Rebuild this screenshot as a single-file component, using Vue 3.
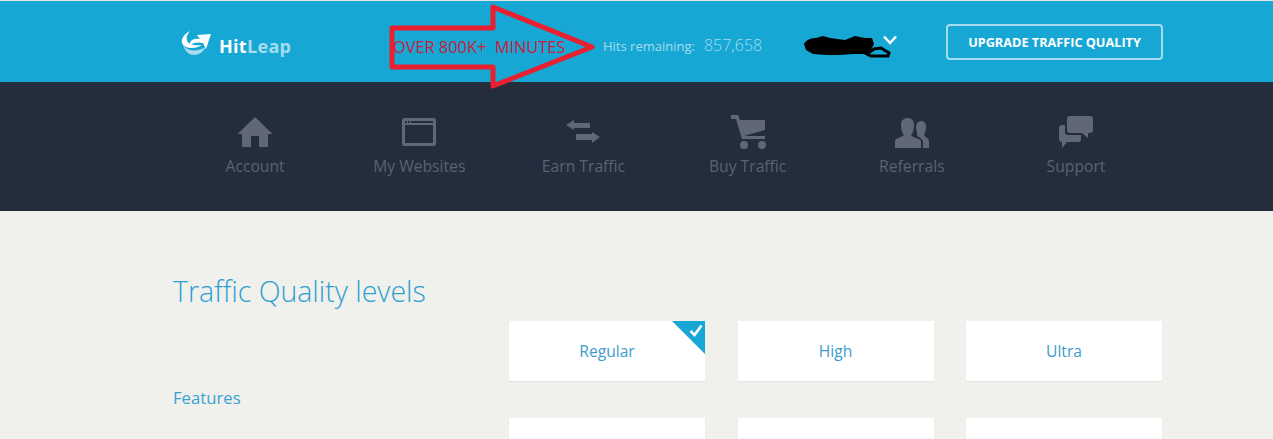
<script setup>
const navItems = [
  { label: 'Account', icon: 'home' },
  { label: 'My Websites', icon: 'window' },
  { label: 'Earn Traffic', icon: 'swap' },
  { label: 'Buy Traffic', icon: 'cart' },
  { label: 'Referrals', icon: 'people' },
  { label: 'Support', icon: 'chat' }
]
</script>

<template>
  <div class="page">
    <header class="top">
      <div class="logo">
        <svg class="logo-mark" width="30" height="26" viewBox="0 0 30 26">
          <path d="M9 1 C3 4 0 9 1 13 C2 16 6 18 11 18 C15 18 19 16 21 15 C15 16 8 15 6 11 C5 8 6 4 9 1 Z" fill="#ffffff" />
          <path d="M2 15 C4 22 9 25 13 25 C18 25 22 22 25 17 C20 20 14 21 9 20 C6 19 3 17 2 15 Z" fill="#a5dcef" />
          <path d="M9 12 C11 9 15 8 19 9 L16 5 L30 4 L25 19 L22 13 C18 12 13 12 9 15 Z" fill="#ffffff" />
        </svg>
        <span class="logo-text">Hit<span class="logo-soft">Leap</span></span>
      </div>
      <div class="note">OVER 800K+&nbsp; MINUTES</div>
      <div class="hits">
        <span class="hits-label">Hits remaining:</span>
        <span class="hits-value">857,658</span>
      </div>
      <div class="user">
        <svg class="scribble" width="92" height="28" viewBox="0 0 92 28">
          <path d="M1 9 C3 5 8 3 13 3 L20 1 L27 3 L42 5 L52 1 L62 3 L69 3 L71 9 L68 15 L64 19 L50 19 L36 20 L24 20 L10 19 L3 15 Z" fill="#000" />
          <path d="M64 19 L71 14 L78 13 L86 18 L85 21 L68 21 Z" fill="#17a7d5" stroke="#000" stroke-width="3" />
        </svg>
        <svg class="chevron" width="14" height="10" viewBox="0 0 14 10">
          <path d="M1 1.5 L7 8 L13 1.5" fill="none" stroke="#fff" stroke-width="2.5" />
        </svg>
      </div>
      <button class="upgrade" type="button">UPGRADE TRAFFIC QUALITY</button>
      <svg class="arrow" width="210" height="90" viewBox="0 0 210 90">
        <path d="M3 25 L104 25 L104 4 L203 44 L104 83 L104 64 L3 64 Z" fill="none" stroke="#e8202f" stroke-width="5" stroke-linejoin="round" />
      </svg>
    </header>

    <nav class="nav">
      <a v-for="item in navItems" :key="item.label" class="nav-item">
        <svg class="nav-icon" width="40" height="36" viewBox="0 0 40 36">
          <template v-if="item.icon === 'home'">
            <path d="M20 2 L37.5 19 L33 19 L33 32 L24 32 L24 21 L16 21 L16 32 L7 32 L7 19 L2.5 19 Z" />
          </template>
          <template v-else-if="item.icon === 'window'">
            <path fill-rule="evenodd" d="M5.5 3 L34.5 3 Q37 3 37 5.5 L37 28.5 Q37 31 34.5 31 L5.5 31 Q3 31 3 28.5 L3 5.5 Q3 3 5.5 3 Z M6 10 L6 28 L34 28 L34 10 Z M6 6 L6 8 L8 8 L8 6 Z M9 6 L9 8 L11 8 L11 6 Z M12 6 L12 8 L34 8 L34 6 Z" />
          </template>
          <template v-else-if="item.icon === 'swap'">
            <path d="M3 10 L11 5 L11 8 L27 8 L27 13 L11 13 L11 15 Z" />
            <path d="M37 22 L29 17 L29 19 L13 19 L13 25 L29 25 L29 28 Z" />
          </template>
          <template v-else-if="item.icon === 'cart'">
            <path d="M3 0 L10 0 L12 5 L37 5 L37 15 L16 21 L37 21 L37 24 L14 24 L8 4 L3 4 Z" />
            <circle cx="16" cy="30" r="4" />
            <circle cx="34" cy="30" r="4" />
          </template>
          <template v-else-if="item.icon === 'people'">
            <path d="M3 33 L3 26 C3 23 9 23 12 20 C10 18 9 14 9 10 C9 5 12 3 16 3 C20 3 22 6 22 10 C22 14 21 18 19 20 C21 23 27 23 29 26 L29 33 Z" />
            <path d="M31 33 L31 26 C29 23 27 22 25 21 C26 20 24 15 24 12 C24 8 27 6 29 6 C32 6 34 8 34 12 C34 15 33 18 32 20 C34 23 37 23 37 26 L37 33 Z" />
          </template>
          <template v-else>
            <path d="M14 1 L34 1 Q37 1 37 4 L37 15 Q37 18 34 18 L32 18 L32 23 L26 18 L14 18 Q11 18 11 15 L11 4 Q11 1 14 1 Z" />
            <path d="M6 10 L9 10 L9 17 Q9 20 12 20 L25 20 L25 24 Q25 27 22 27 L11 27 L6 33 L6 27 Q3 27 3 24 L3 13 Q3 10 6 10 Z" />
          </template>
        </svg>
        <span class="nav-label">{{ item.label }}</span>
      </a>
    </nav>

    <main class="content">
      <h1 class="title">Traffic Quality levels</h1>
      <div class="grid">
        <div class="features">Features</div>
        <div class="card selected">
          Regular
          <span class="corner"></span>
          <svg class="tick" width="14" height="13" viewBox="0 0 14 13">
            <path d="M1.5 7 L5.5 11 L12.5 1.5" fill="none" stroke="#fff" stroke-width="2.6" />
          </svg>
        </div>
        <div class="card">High</div>
        <div class="card">Ultra</div>
        <div class="card"></div>
        <div class="card"></div>
        <div class="card"></div>
      </div>
    </main>
  </div>
</template>

<style>
html, body { margin: 0; overflow: hidden; }
</style>

<style scoped>
.page {
  height: 439px;
  overflow: hidden;
  background: #f0f0ec;
  font-family: "Open Sans", sans-serif;
}
.top {
  position: relative;
  box-sizing: border-box;
  height: 82px;
  border-top: 1px solid #e4e6e6;
  background: #17a7d5;
  display: flex;
  align-items: center;
  padding-left: 181px;
}
.logo {
  display: flex;
  align-items: center;
  width: 209px;
  gap: 8px;
  margin-top: 8px;
}
.logo-mark { flex: none; margin-top: -5px; }
.logo-text {
  font-size: 18px;
  font-weight: 700;
  color: #fff;
  letter-spacing: 0.3px;
}
.logo-soft { color: #a5dcef; }
.note {
  width: 213px;
  font-size: 16.35px;
  color: #c8203c;
  white-space: nowrap;
  margin-top: 10px;
  padding-left: 3px;
  box-sizing: border-box;
}
.hits {
  display: flex;
  align-items: baseline;
  gap: 9px;
  width: 200px;
  color: #a5dcef;
  margin-top: 6px;
}
.hits-label { font-size: 13px; font-weight: 400; }
.hits-value { font-size: 16px; font-weight: 300; }
.user {
  display: flex;
  align-items: center;
  width: 143px;
  position: relative;
}
.scribble { margin-top: 14px; }
.chevron { position: absolute; left: 80px; top: 14px; }
.upgrade {
  box-sizing: border-box;
  width: 217px;
  height: 36px;
  margin-top: 0;
  border: 2px solid #a5dcef;
  border-radius: 4px;
  background: transparent;
  color: #fff;
  font-family: "Open Sans", sans-serif;
  font-size: 12.7px;
  font-weight: 700;
  padding: 0;
}
.arrow {
  position: absolute;
  left: 389px;
  top: 2px;
}
.nav {
  box-sizing: border-box;
  height: 129px;
  background: #242d3c;
  display: grid;
  grid-template-columns: repeat(6, 164.2px);
  padding: 33px 0 0 173px;
}
.nav-item {
  display: flex;
  flex-direction: column;
  align-items: center;
  color: #5a6370;
}
.nav-icon { fill: #5f6874; }
.nav-label {
  font-size: 15.7px;
  line-height: 22px;
  margin-top: 4px;
  color: #5a6370;
}
.content {
  padding: 62px 111px 0 173px;
}
.title {
  margin: 0;
  font-size: 28.5px;
  font-weight: 300;
  line-height: 36px;
  color: #2f9fd0;
}
.grid {
  display: grid;
  grid-template-columns: 303.5px repeat(3, 196px);
  grid-auto-rows: 60px;
  column-gap: 32.5px;
  row-gap: 37px;
  margin-top: 12px;
}
.features {
  grid-row: 1 / 3;
  padding-top: 66px;
  font-size: 16.7px;
  line-height: 22px;
  color: #3ba2cf;
}
.card {
  position: relative;
  overflow: hidden;
  display: flex;
  align-items: center;
  justify-content: center;
  background: #fff;
  box-shadow: 0 1px 1px rgba(0, 0, 0, 0.05);
  font-size: 15.6px;
  color: #3b9ccb;
}
.corner {
  position: absolute;
  top: 0;
  right: 0;
  border-style: solid;
  border-width: 0 33px 33px 0;
  border-color: transparent #17a7d5 transparent transparent;
}
.tick { position: absolute; top: 3px; right: 2px; }
</style>
